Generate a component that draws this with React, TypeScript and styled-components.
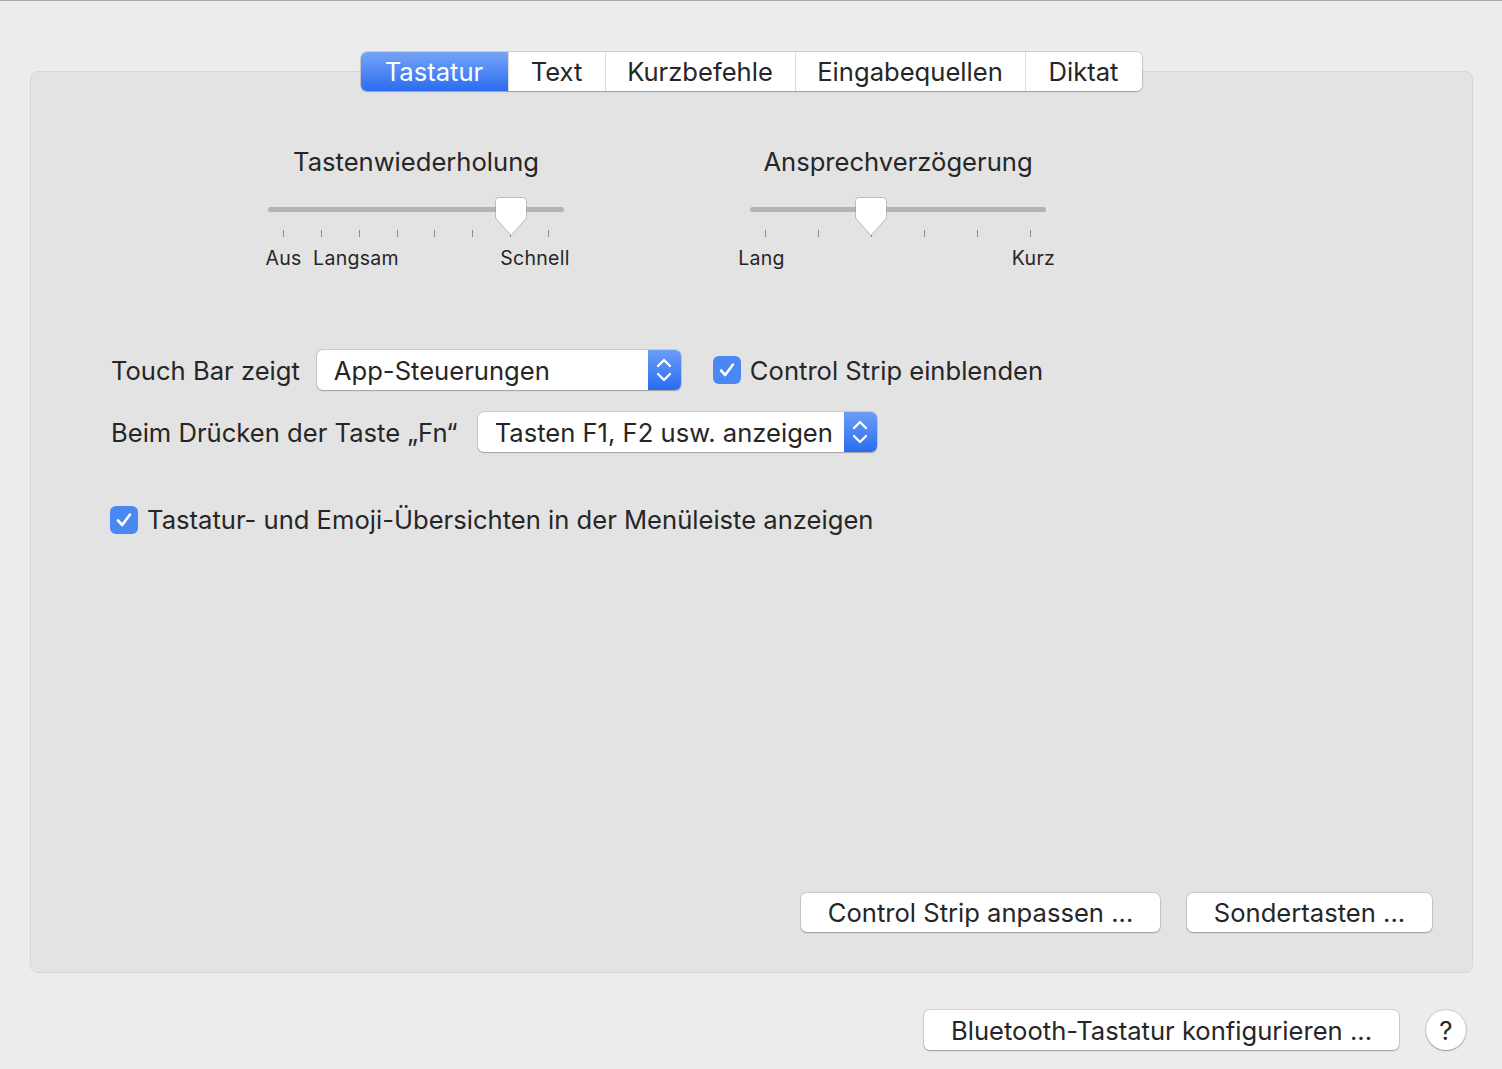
import styled, { createGlobalStyle } from "styled-components"

const GlobalStyle = createGlobalStyle`
  html, body {
    margin: 0;
    padding: 0;
    background: #ececec;
  }
  body {
    font-family: Inter, "Noto Sans", "Liberation Sans", sans-serif;
    color: #262626;
    -webkit-font-smoothing: antialiased;
  }
`

const Window = styled.div`
  width: 1502px;
  height: 1069px;
  box-sizing: border-box;
  border-top: 1px solid #a9a9a9;
  background: #ececec;
  display: flex;
  flex-direction: column;
  overflow: hidden;
`

const TabWrap = styled.div`
  margin-top: 51px;
  display: flex;
  justify-content: center;
  position: relative;
  z-index: 2;
`

const TabBar = styled.div`
  display: flex;
  height: 39px;
  background: #fff;
  border-radius: 6px;
  box-shadow: 0 0 0 1px rgba(0, 0, 0, 0.12), 0 1px 1.5px rgba(0, 0, 0, 0.22);
  overflow: hidden;
`

const Tab = styled.div<{ $active?: boolean; $width: number }>`
  display: flex;
  align-items: center;
  justify-content: center;
  box-sizing: border-box;
  width: ${({ $width }) => $width}px;
  font-size: 25.6px;
  color: ${({ $active }) => ($active ? "#fff" : "#262626")};
  background: ${({ $active }) =>
    $active ? "linear-gradient(to bottom, #76a4f6, #2a6cf1)" : "#fff"};
  & + & {
    border-left: 1px solid #dcdcdc;
  }
`

const Panel = styled.div`
  margin: -20px 29px 0 30px;
  height: 902px;
  box-sizing: border-box;
  background: #e3e3e3;
  border: 1px solid #d6d6d6;
  border-radius: 8px;
  display: flex;
  flex-direction: column;
  padding: 74px 40px 40px 80px;
`

const SlidersRow = styled.div`
  display: flex;
  gap: 186px;
  padding-left: 157px;
`

const SliderGroup = styled.div`
  width: 296px;
  display: flex;
  flex-direction: column;
`

const SliderTitle = styled.div`
  font-size: 25.6px;
  line-height: 32px;
  text-align: center;
  white-space: nowrap;
`

const Track = styled.div`
  position: relative;
  margin-top: 29px;
  height: 5px;
  border-radius: 3px;
  background: #b3b3b3;
`

const Thumb = styled.svg`
  position: absolute;
  top: -11px;
  width: 34px;
  height: 42px;
  transform: translateX(-17px);
  overflow: visible;
`

const Ticks = styled.div`
  margin-top: 18px;
  padding: 0 15px;
  display: flex;
  justify-content: space-between;
`

const Tick = styled.span`
  width: 1px;
  height: 7px;
  background: #8c8c8c;
`

const ScaleLabels = styled.div`
  position: relative;
  margin-top: 9px;
  height: 24px;
`

const ScaleLabel = styled.span`
  position: absolute;
  top: 0;
  font-size: 19.5px;
  line-height: 24px;
  letter-spacing: 0.3px;
  white-space: nowrap;
  transform: translateX(-50%);
`

const Form = styled.div`
  margin-top: 80px;
  display: flex;
  flex-direction: column;
  gap: 22px;
`

const FormRow = styled.div`
  display: flex;
  align-items: center;
  height: 40px;
`

const Label = styled.span<{ $gap: number }>`
  font-size: 25.6px;
  white-space: nowrap;
  margin-right: ${({ $gap }) => $gap}px;
`

const Popup = styled.div<{ $width: number }>`
  width: ${({ $width }) => $width}px;
  height: 40px;
  box-sizing: border-box;
  display: flex;
  align-items: stretch;
  background: #fff;
  border-radius: 6px;
  box-shadow: 0 0 0 1px rgba(0, 0, 0, 0.1), 0 1px 1.5px rgba(0, 0, 0, 0.22);
  overflow: hidden;
`

const PopupText = styled.span`
  flex: 1;
  display: flex;
  align-items: center;
  padding-left: 17px;
  font-size: 25.6px;
  white-space: nowrap;
`

const Stepper = styled.span`
  width: 33px;
  display: flex;
  align-items: center;
  justify-content: center;
  background: linear-gradient(to bottom, #6c9df6, #2a6cf1);
`

const CheckRow = styled.label<{ $left?: number }>`
  display: flex;
  align-items: center;
  gap: 9px;
  margin-left: ${({ $left }) => $left ?? 0}px;
  font-size: 25.6px;
  white-space: nowrap;
`

const Box = styled.span`
  width: 28px;
  height: 28px;
  border-radius: 6px;
  background: #4a87f3;
  display: flex;
  align-items: center;
  justify-content: center;
`

const StandaloneCheck = styled.div`
  margin-top: 52px;
  margin-left: -1px;
`

const ButtonRow = styled.div`
  margin-top: auto;
  display: flex;
  justify-content: flex-end;
  gap: 27px;
`

const PushButton = styled.button<{ $width: number; $height?: number }>`
  width: ${({ $width }) => $width}px;
  height: ${({ $height }) => $height ?? 39}px;
  border: none;
  border-radius: 6px;
  background: #fff;
  box-shadow: 0 0 0 1px rgba(0, 0, 0, 0.1), 0 1px 1.5px rgba(0, 0, 0, 0.25);
  font-family: inherit;
  font-size: 25.6px;
  color: #262626;
  padding: 0;
  white-space: nowrap;
`

const Footer = styled.div`
  margin-top: 37px;
  display: flex;
  justify-content: flex-end;
  align-items: center;
  gap: 27px;
  padding-right: 36px;
`

const HelpButton = styled.button`
  width: 40px;
  height: 40px;
  border-radius: 50%;
  border: none;
  background: #fff;
  box-shadow: 0 0 0 1px rgba(0, 0, 0, 0.12), 0 1px 1.5px rgba(0, 0, 0, 0.25);
  font-family: inherit;
  font-size: 26px;
  color: #262626;
  padding: 0;
`

function ThumbShape({ at }: { at: number }) {
  return (
    <Thumb viewBox="0 0 34 42" style={{ left: at }}>
      <path
        d="M5 1.5 H29 Q32.5 1.5 32.5 5 V22 L17 39.5 L1.5 22 V5 Q1.5 1.5 5 1.5 Z"
        fill="#fff"
        stroke="rgba(0,0,0,0.22)"
        strokeWidth="1"
      />
    </Thumb>
  )
}

function Check() {
  return (
    <svg width="20" height="20" viewBox="0 0 20 20">
      <path
        d="M4 10.5 L8.2 15 L16 4.5"
        fill="none"
        stroke="#fff"
        strokeWidth="2.6"
        strokeLinecap="round"
        strokeLinejoin="round"
      />
    </svg>
  )
}

function Chevrons() {
  return (
    <svg width="18" height="28" viewBox="0 0 18 28">
      <path
        d="M3 10 L9 4 L15 10 M3 18 L9 24 L15 18"
        fill="none"
        stroke="#fff"
        strokeWidth="2.3"
        strokeLinecap="round"
        strokeLinejoin="round"
      />
    </svg>
  )
}

interface SliderProps {
  title: string
  ticks: number
  thumb: number
  labels: { text: string; at: number }[]
}

function Slider({ title, ticks, thumb, labels }: SliderProps) {
  return (
    <SliderGroup>
      <SliderTitle>{title}</SliderTitle>
      <Track>
        <ThumbShape at={thumb} />
      </Track>
      <Ticks>
        {Array.from({ length: ticks }).map((_, i) => (
          <Tick key={i} />
        ))}
      </Ticks>
      <ScaleLabels>
        {labels.map((l) => (
          <ScaleLabel key={l.text} style={{ left: l.at }}>
            {l.text}
          </ScaleLabel>
        ))}
      </ScaleLabels>
    </SliderGroup>
  )
}

const tabs = ["Tastatur", "Text", "Kurzbefehle", "Eingabequellen", "Diktat"]
const tabWidths = [147, 97, 190, 230, 117]

export default function App() {
  return (
    <Window>
      <GlobalStyle />
      <TabWrap>
        <TabBar>
          {tabs.map((t, i) => (
            <Tab key={t} $active={i === 0} $width={tabWidths[i]}>
              {t}
            </Tab>
          ))}
        </TabBar>
      </TabWrap>

      <Panel>
        <SlidersRow>
          <Slider
            title="Tastenwiederholung"
            ticks={8}
            thumb={243}
            labels={[
              { text: "Aus", at: 15.5 },
              { text: "Langsam", at: 88 },
              { text: "Schnell", at: 267 },
            ]}
          />
          <Slider
            title="Ansprechverzögerung"
            ticks={6}
            thumb={121}
            labels={[
              { text: "Lang", at: 11.5 },
              { text: "Kurz", at: 283.5 },
            ]}
          />
        </SlidersRow>

        <Form>
          <FormRow>
            <Label $gap={17}>Touch Bar zeigt</Label>
            <Popup $width={364}>
              <PopupText>App-Steuerungen</PopupText>
              <Stepper>
                <Chevrons />
              </Stepper>
            </Popup>
            <CheckRow $left={32}>
              <Box>
                <Check />
              </Box>
              Control Strip einblenden
            </CheckRow>
          </FormRow>
          <FormRow>
            <Label $gap={20}>Beim Drücken der Taste „Fn“</Label>
            <Popup $width={399}>
              <PopupText>Tasten F1, F2 usw. anzeigen</PopupText>
              <Stepper>
                <Chevrons />
              </Stepper>
            </Popup>
          </FormRow>
        </Form>

        <StandaloneCheck>
          <CheckRow>
            <Box>
              <Check />
            </Box>
            Tastatur- und Emoji-Übersichten in der Menüleiste anzeigen
          </CheckRow>
        </StandaloneCheck>

        <ButtonRow>
          <PushButton $width={359}>Control Strip anpassen ...</PushButton>
          <PushButton $width={245}>Sondertasten ...</PushButton>
        </ButtonRow>
      </Panel>

      <Footer>
        <PushButton $width={475} $height={40}>
          Bluetooth-Tastatur konfigurieren ...
        </PushButton>
        <HelpButton>?</HelpButton>
      </Footer>
    </Window>
  )
}
